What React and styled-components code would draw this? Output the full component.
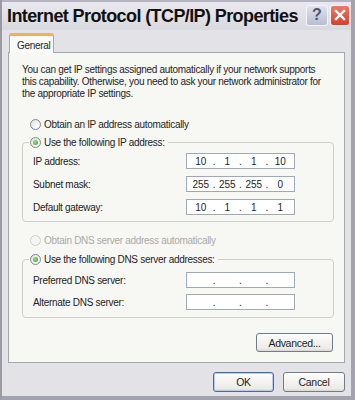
import { Fragment } from "react";
import styled, { createGlobalStyle } from "styled-components";

const GlobalStyle = createGlobalStyle`
  html, body {
    margin: 0;
    padding: 0;
    background: #d8d8de;
  }
  * {
    box-sizing: border-box;
  }
`;

const Window = styled.div`
  width: 355px;
  height: 400px;
  display: flex;
  flex-direction: column;
  background: #e3e2e7;
  border-left: 2px solid #9a9aa4;
  border-right: 4px solid #a3a3ad;
  border-bottom: 4px solid #a3a3ad;
  font-family: "Liberation Sans", Arial, sans-serif;
  font-size: 10px;
  letter-spacing: -0.3px;
  color: #1e1e1e;
  overflow: hidden;
`;

const TitleBar = styled.div`
  height: 30px;
  display: flex;
  align-items: center;
  justify-content: space-between;
  padding: 0 1px 0 5px;
  background: linear-gradient(#e8e8ee, #d9d9e0);
  border-top: 2px solid #b4b4c0;
`;

const Title = styled.span`
  font-size: 18px;
  font-weight: bold;
  letter-spacing: -0.6px;
  color: #111;
  margin-top: 1px;
`;

const Controls = styled.div`
  display: flex;
  gap: 2px;
  margin-top: -2px;
`;

const CaptionButton = styled.div`
  width: ${(props) => props.$width}px;
  height: 21px;
  display: flex;
  align-items: center;
  justify-content: center;
  border: 1px solid #f4f4f8;
  border-radius: 3px;
  background: ${(props) => props.$bg};
  font-size: 16px;
  font-weight: bold;
  letter-spacing: 0;
  color: ${(props) => props.$color};
`;

const Body = styled.div`
  flex: 1;
  display: flex;
  flex-direction: column;
  padding: 3px 6px 0 6px;
`;

const TabStrip = styled.div`
  display: flex;
  padding-left: 1px;
  margin-bottom: -1px;
`;

const Tab = styled.div`
  position: relative;
  z-index: 1;
  width: 45px;
  height: 20px;
  padding: 4px 0 0 7px;
  background: #fbfbfa;
  border: 1px solid #a3a9ab;
  border-bottom: none;
  border-top: 3px solid #f2b34a;
  border-radius: 3px 3px 0 0;
`;

const Panel = styled.div`
  width: 337px;
  display: flex;
  flex-direction: column;
  padding: 11px 10px 10px 13px;
  background: #f7f7f4;
  border: 1px solid #a3a9ab;
`;

const Intro = styled.p`
  margin: 0;
  line-height: 12px;
  width: 302px;
`;

const OptionRow = styled.div`
  height: 14px;
  display: flex;
  align-items: center;
  gap: 3px;
  padding-left: 8px;
  margin-top: ${(props) => props.$top}px;
  color: ${(props) => (props.$disabled ? "#aaaaa4" : "inherit")};
`;

const Radio = styled.span`
  position: relative;
  width: 11px;
  height: 11px;
  flex: none;
  border-radius: 50%;
  border: 1px solid ${(props) => (props.$disabled ? "#cfcfca" : "#7d8a96")};
  background: ${(props) =>
    props.$disabled ? "#f4f4f1" : "radial-gradient(circle at 65% 65%, #ffffff, #dcdcd6)"};

  &::after {
    content: "";
    display: ${(props) => (props.$checked ? "block" : "none")};
    position: absolute;
    left: 2px;
    top: 2px;
    width: 5px;
    height: 5px;
    border-radius: 50%;
    background: radial-gradient(circle at 40% 40%, #9be08c, #2f9d2a);
  }
`;

const Group = styled.fieldset`
  margin: ${(props) => props.$top}px 0 0 0;
  width: 312px;
  padding: ${(props) => props.$padTop}px 38px ${(props) => props.$padBottom}px 10px;
  border: 1px solid #cfcfc6;
  border-radius: 4px;
  display: flex;
  flex-direction: column;
  gap: ${(props) => props.$gap}px;
`;

const Legend = styled.legend`
  height: 14px;
  display: flex;
  align-items: center;
  gap: 3px;
  margin-left: -4px;
  padding: 0 3px 0 1px;
`;

const FieldRow = styled.div`
  height: 16px;
  display: flex;
  align-items: center;
  justify-content: space-between;
`;

const IpBox = styled.div`
  width: 109px;
  height: 16px;
  display: flex;
  align-items: center;
  padding: 0 4px;
  background: #ffffff;
  border: 1px solid #9eaab6;
  letter-spacing: 0;
`;

const Octet = styled.span`
  width: 20px;
  text-align: center;
`;

const Dot = styled.span`
  width: 7px;
  text-align: center;
`;

const Button = styled.div`
  width: ${(props) => props.$width}px;
  height: ${(props) => props.$height}px;
  display: flex;
  align-items: center;
  justify-content: center;
  border: 1px solid ${(props) => (props.$default ? "#4a6b96" : "#6f7c8c")};
  border-radius: 3px;
  background: linear-gradient(#fdfdfc, #ecebe6 85%, #d8d7d0);
  box-shadow: ${(props) =>
    props.$default ? "inset 0 0 0 1px #b8cdee" : "none"};
  font-size: 10.5px;
`;

const AdvancedRow = styled.div`
  display: flex;
  justify-content: flex-end;
  margin-top: 15px;
  padding-right: 1px;
`;

const Footer = styled.div`
  display: flex;
  justify-content: flex-end;
  gap: 9px;
  padding: 9px 0 0 0;
  width: 337px;
`;

const IpField = ({ values }) => (
  <IpBox>
    {values.map((value, index) => (
      <Fragment key={index}>
        <Octet>{value}</Octet>
        {index < 3 && <Dot>.</Dot>}
      </Fragment>
    ))}
  </IpBox>
);

const ipRows = [
  { label: "IP address:", values: ["10", "1", "1", "10"] },
  { label: "Subnet mask:", values: ["255", "255", "255", "0"] },
  { label: "Default gateway:", values: ["10", "1", "1", "1"] },
];

const dnsRows = [
  { label: "Preferred DNS server:", values: ["", "", "", ""] },
  { label: "Alternate DNS server:", values: ["", "", "", ""] },
];

const App = () => {
  return (
    <>
      <GlobalStyle />
      <Window>
        <TitleBar>
          <Title>Internet Protocol (TCP/IP) Properties</Title>
          <Controls>
            <CaptionButton $width={22} $bg="linear-gradient(#dfe1ec, #b9bdd2)" $color="#50556f">
              ?
            </CaptionButton>
            <CaptionButton $width={20} $bg="linear-gradient(#ec7a66, #d6402c)" $color="#ffffff">
              <svg width="12" height="12" viewBox="0 0 12 12">
                <path d="M2 2 L10 10 M10 2 L2 10" stroke="#ffffff" strokeWidth="2.4" strokeLinecap="square" />
              </svg>
            </CaptionButton>
          </Controls>
        </TitleBar>
        <Body>
          <TabStrip>
            <Tab>General</Tab>
          </TabStrip>
          <Panel>
            <Intro>
              You can get IP settings assigned automatically if your network supports
              this capability. Otherwise, you need to ask your network administrator for
              the appropriate IP settings.
            </Intro>
            <OptionRow $top={17}>
              <Radio />
              Obtain an IP address automatically
            </OptionRow>
            <Group $top={4} $padTop={4} $padBottom={6} $gap={7}>
              <Legend>
                <Radio $checked />
                Use the following IP address:
              </Legend>
              {ipRows.map((row) => (
                <FieldRow key={row.label}>
                  {row.label}
                  <IpField values={row.values} />
                </FieldRow>
              ))}
            </Group>
            <OptionRow $top={11} $disabled>
              <Radio $disabled />
              Obtain DNS server address automatically
            </OptionRow>
            <Group $top={5} $padTop={6} $padBottom={7} $gap={6}>
              <Legend>
                <Radio $checked />
                Use the following DNS server addresses:
              </Legend>
              {dnsRows.map((row) => (
                <FieldRow key={row.label}>
                  {row.label}
                  <IpField values={row.values} />
                </FieldRow>
              ))}
            </Group>
            <AdvancedRow>
              <Button $width={77} $height={19}>Advanced...</Button>
            </AdvancedRow>
          </Panel>
          <Footer>
            <Button $width={61} $height={20} $default>OK</Button>
            <Button $width={62} $height={20}>Cancel</Button>
          </Footer>
        </Body>
      </Window>
    </>
  );
};

export default App;
